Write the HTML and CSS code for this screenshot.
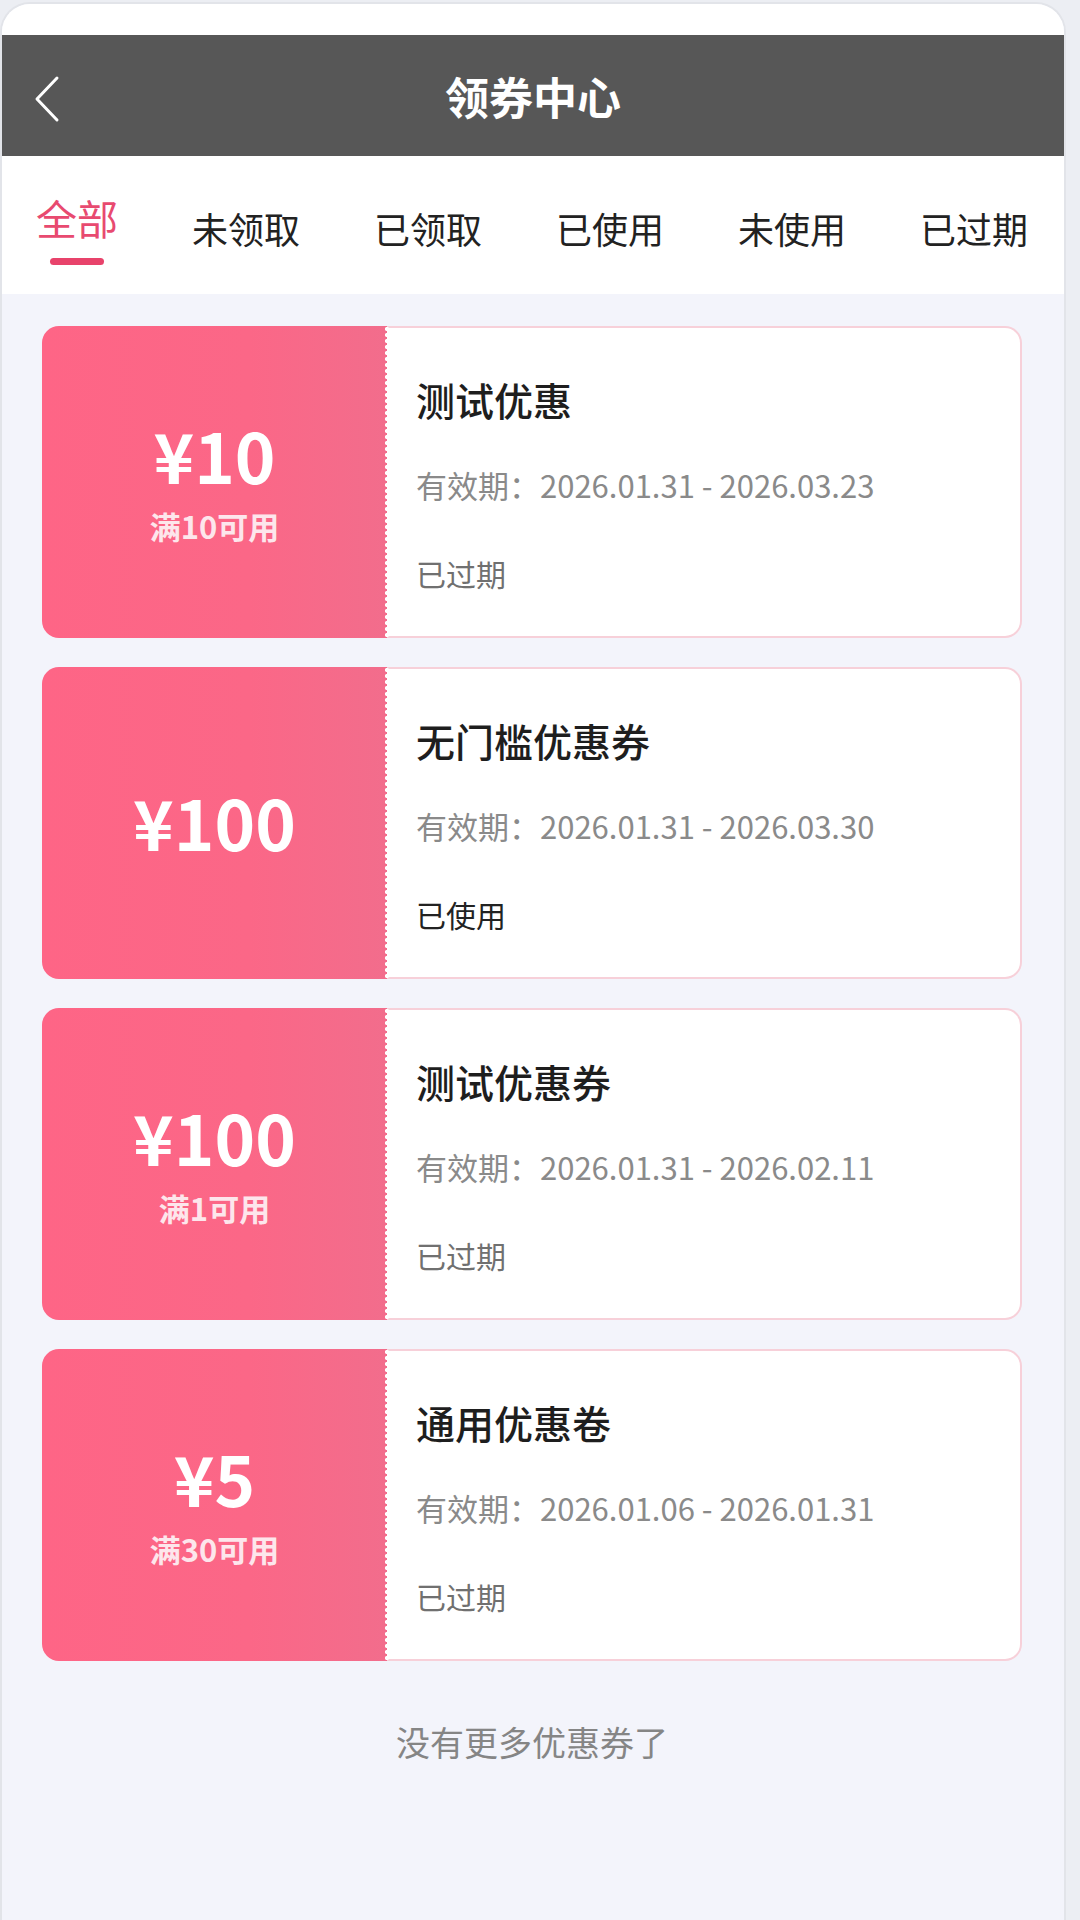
FILE: index.html
```html
<!DOCTYPE html>
<html lang="zh-CN">
<head>
<meta charset="utf-8">
<title>领券中心</title>
<link rel="stylesheet" href="styles.css">
</head>
<body>
<div class="phone">
  <div class="status"></div>
  <header class="navbar">
    <div class="nav-back">
      <svg width="28" height="48" viewBox="0 0 28 48"><polyline points="24,3 4,24 24,45" fill="none" stroke="#fff" stroke-width="3" stroke-linecap="round" stroke-linejoin="round"/></svg>
    </div>
    <div class="nav-title">领券中心</div>
    <div class="nav-right"></div>
  </header>
  <nav class="tabs">
    <div class="tab active"><span class="tab-label">全部</span><span class="tab-line"></span></div>
    <div class="tab"><span class="tab-label">未领取</span></div>
    <div class="tab"><span class="tab-label">已领取</span></div>
    <div class="tab"><span class="tab-label">已使用</span></div>
    <div class="tab"><span class="tab-label">未使用</span></div>
    <div class="tab"><span class="tab-label">已过期</span></div>
  </nav>
  <main class="list">
    <div class="coupon">
      <div class="coupon-left">
        <div class="amount">¥10</div>
        <div class="cond">满10可用</div>
      </div>
      <div class="coupon-right">
        <div class="c-title">测试优惠</div>
        <div class="c-date">有效期：2026.01.31 - 2026.03.23</div>
        <div class="c-status">已过期</div>
      </div>
    </div>
    <div class="coupon">
      <div class="coupon-left">
        <div class="amount">¥100</div>
      </div>
      <div class="coupon-right">
        <div class="c-title">无门槛优惠券</div>
        <div class="c-date">有效期：2026.01.31 - 2026.03.30</div>
        <div class="c-status used">已使用</div>
      </div>
    </div>
    <div class="coupon">
      <div class="coupon-left">
        <div class="amount">¥100</div>
        <div class="cond">满1可用</div>
      </div>
      <div class="coupon-right">
        <div class="c-title">测试优惠券</div>
        <div class="c-date">有效期：2026.01.31 - 2026.02.11</div>
        <div class="c-status">已过期</div>
      </div>
    </div>
    <div class="coupon">
      <div class="coupon-left">
        <div class="amount">¥5</div>
        <div class="cond">满30可用</div>
      </div>
      <div class="coupon-right">
        <div class="c-title">通用优惠卷</div>
        <div class="c-date">有效期：2026.01.06 - 2026.01.31</div>
        <div class="c-status">已过期</div>
      </div>
    </div>
    <div class="no-more">没有更多优惠券了</div>
  </main>
</div>
</body>
</html>
```

FILE: styles.css
```css
* { box-sizing: border-box; }
html, body { margin: 0; padding: 0; }
body {
  background: #eceef3;
  font-family: "Noto Sans CJK SC", "Noto Sans", sans-serif;
  width: 1080px;
  height: 1920px;
  overflow: hidden;
}
.phone {
  width: 1066px;
  margin-top: 2px;
  height: 1918px;
  background: #f3f4fb;
  border: 2px solid #e2e4e9;
  border-bottom: none;
  border-radius: 30px 30px 0 0;
  overflow: hidden;
}
.status {
  height: 31px;
  background: #fff;
}
.navbar {
  height: 121px;
  background: #575757;
  display: grid;
  grid-template-columns: 120px 1fr 120px;
  align-items: center;
}
.nav-back {
  padding-left: 31px;
  padding-top: 6px;
  display: flex;
  align-items: center;
}
.nav-title {
  text-align: center;
  color: #fff;
  font-size: 44px;
  font-weight: 700;
}
.tabs {
  height: 138px;
  background: #fff;
  display: flex;
  align-items: flex-start;
  gap: 74px;
  padding-left: 34px;
}
.tab {
  display: flex;
  flex-direction: column;
  align-items: center;
  margin-top: 50px;
}
.tab-label {
  font-size: 36px;
  line-height: 44px;
  color: #222;
}
.tab.active { margin-top: 37px; }
.tab.active .tab-label {
  font-size: 41px;
  line-height: 48px;
  color: #e84a70;
}
.tab-line {
  display: block;
  width: 54px;
  height: 7px;
  border-radius: 4px;
  background: #e8436b;
  margin-top: 17px;
}
.list {
  padding: 32px 42px 0 40px;
  display: flex;
  flex-direction: column;
  gap: 29px;
}
.coupon {
  height: 312px;
  display: flex;
}
.coupon-left {
  position: relative;
  width: 345px;
  flex: none;
  background: linear-gradient(90deg, #fe6586 0%, #fb6787 60%, #f26d8c 100%);
  border-radius: 17px 0 0 17px;
  display: flex;
  flex-direction: column;
  align-items: center;
  justify-content: center;
  color: #fff;
  padding-bottom: 4px;
}
.coupon-left::after {
  content: "";
  position: absolute;
  top: 0;
  bottom: 0;
  right: -3px;
  width: 6px;
  background: radial-gradient(circle at 3px 3px, #fff 1.8px, rgba(255,255,255,0) 2.4px) 0 0 / 6px 6px repeat-y;
}
.amount {
  font-size: 69px;
  font-weight: 700;
  line-height: 80px;
}
.cond {
  font-size: 31px;
  font-weight: 700;
  line-height: 40px;
  margin-top: 12px;
  color: #fde6ec;
}
.coupon-right {
  flex: 1;
  background: #fff;
  border: 2px solid #f7d0d9;
  border-left: none;
  border-radius: 0 17px 17px 0;
  padding: 47px 0 0 29px;
}
.c-title {
  font-size: 39px;
  font-weight: 500;
  line-height: 48px;
  color: #1e1e1e;
}
.c-date {
  font-size: 31px;
  line-height: 40px;
  color: #8a8a8a;
  margin-top: 42px;
}
.c-status {
  font-size: 30px;
  line-height: 40px;
  color: #707070;
  margin-top: 48px;
}
.c-status.used { color: #222; }
.no-more {
  text-align: center;
  font-size: 34px;
  line-height: 44px;
  color: #858585;
  margin-top: 30px;
  padding-bottom: 40px;
}
```
